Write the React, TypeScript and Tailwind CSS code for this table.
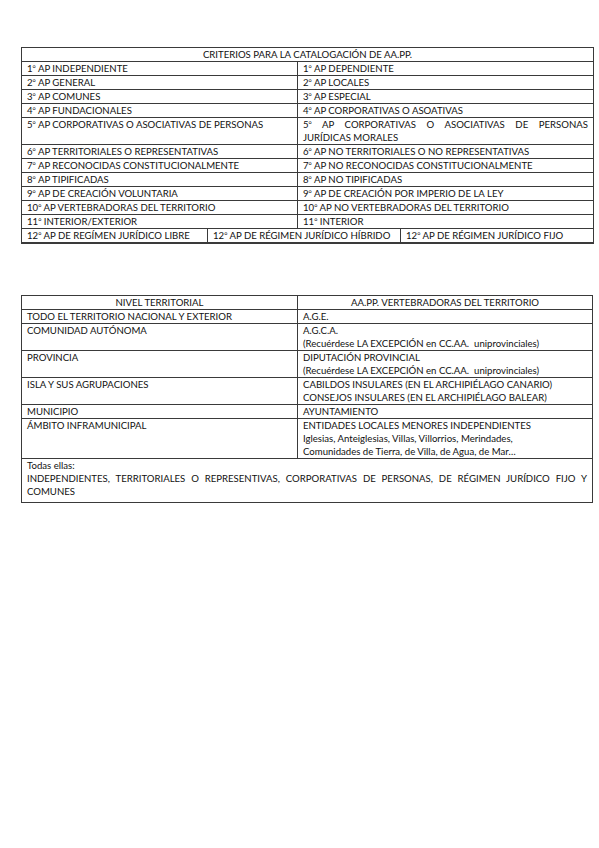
import React from "react";

const cell = "border border-[#3a3a3a] px-[5px] align-top";

const pairs: [string, string][] = [
  ["1º AP INDEPENDIENTE", "1º AP DEPENDIENTE"],
  ["2º AP GENERAL", "2º AP LOCALES"],
  ["3º AP COMUNES", "3º AP ESPECIAL"],
  ["4º AP FUNDACIONALES", "4º AP CORPORATIVAS O ASOATIVAS"],
];

const pairs2: [string, string][] = [
  ["6º AP TERRITORIALES O REPRESENTATIVAS", "6º AP NO TERRITORIALES O NO REPRESENTATIVAS"],
  ["7º AP RECONOCIDAS CONSTITUCIONALMENTE", "7º AP NO RECONOCIDAS CONSTITUCIONALMENTE"],
  ["8º AP TIPIFICADAS", "8º AP NO TIPIFICADAS"],
  ["9º AP DE CREACIÓN VOLUNTARIA", "9º AP DE CREACIÓN POR IMPERIO DE LA LEY"],
  ["10º AP VERTEBRADORAS DEL TERRITORIO", "10º AP NO VERTEBRADORAS DEL TERRITORIO"],
  ["11º INTERIOR/EXTERIOR", "11º INTERIOR"],
];

// Lato draws º like a degree sign, so the ordinal gets a font with an underlined one
function Ord({ text }: { text: string }) {
  const [num, ...rest] = text.split("º");
  return (
    <>
      {num}
      <span className="[font-family:'Open_Sans',sans-serif] text-[8.5px]">º</span>
      {rest.join("º")}
    </>
  );
}

function Justified({ children }: { children: React.ReactNode }) {
  // first line of a justified paragraph: spread to the full cell width
  return <div className="text-justify [text-align-last:justify]">{children}</div>;
}

export default function App() {
  return (
    <div className="min-h-[848px] w-[599px] bg-white pt-[47px] text-[9.6px] leading-[13px] text-[#111] [font-family:Lato,'Liberation_Sans',sans-serif]">
      <table className="ml-[21px] w-[572px] table-fixed border-collapse">
        <colgroup>
          <col className="w-[186px]" />
          <col className="w-[90px]" />
          <col className="w-[103px]" />
          <col className="w-[193px]" />
        </colgroup>
        <tbody>
          <tr>
            <td colSpan={4} className={`${cell} text-center`}>
              CRITERIOS PARA LA CATALOGACIÓN DE AA.PP.
            </td>
          </tr>
          {pairs.map(([a, b]) => (
            <tr key={a}>
              <td colSpan={2} className={cell}><Ord text={a} /></td>
              <td colSpan={2} className={cell}><Ord text={b} /></td>
            </tr>
          ))}
          <tr>
            <td colSpan={2} className={cell}>
              <Ord text="5º AP CORPORATIVAS O ASOCIATIVAS DE PERSONAS" />
            </td>
            <td colSpan={2} className={cell}>
              <Justified>
                <Ord text="5º AP CORPORATIVAS O ASOCIATIVAS DE PERSONAS" />
              </Justified>
              <div>JURÍDICAS MORALES</div>
            </td>
          </tr>
          {pairs2.map(([a, b]) => (
            <tr key={a}>
              <td colSpan={2} className={cell}><Ord text={a} /></td>
              <td colSpan={2} className={cell}><Ord text={b} /></td>
            </tr>
          ))}
          <tr>
            <td className={`${cell} border-b-2`}>
              <Ord text="12º AP DE REGÍMEN JURÍDICO LIBRE" />
            </td>
            <td colSpan={2} className={`${cell} border-b-2`}>
              <Ord text="12º AP DE RÉGIMEN JURÍDICO HÍBRIDO" />
            </td>
            <td className={`${cell} border-b-2`}>
              <Ord text="12º AP DE RÉGIMEN JURÍDICO FIJO" />
            </td>
          </tr>
        </tbody>
      </table>

      <table className="ml-[21px] mt-[51px] w-[571px] table-fixed border-collapse">
        <colgroup>
          <col className="w-[276px]" />
          <col className="w-[295px]" />
        </colgroup>
        <tbody>
          <tr>
            <td className={`${cell} text-center`}>NIVEL TERRITORIAL</td>
            <td className={`${cell} text-center`}>AA.PP. VERTEBRADORAS DEL TERRITORIO</td>
          </tr>
          <tr>
            <td className={cell}>TODO EL TERRITORIO NACIONAL Y EXTERIOR</td>
            <td className={cell}>A.G.E.</td>
          </tr>
          <tr>
            <td className={cell}>COMUNIDAD AUTÓNOMA</td>
            <td className={`${cell} whitespace-pre`}>
              <div>A.G.C.A.</div>
              <div>(Recuérdese LA EXCEPCIÓN en CC.AA.  uniprovinciales)</div>
            </td>
          </tr>
          <tr>
            <td className={cell}>PROVINCIA</td>
            <td className={`${cell} whitespace-pre`}>
              <div>DIPUTACIÓN PROVINCIAL</div>
              <div>(Recuérdese LA EXCEPCIÓN en CC.AA.  uniprovinciales)</div>
            </td>
          </tr>
          <tr>
            <td className={cell}>ISLA Y SUS AGRUPACIONES</td>
            <td className={cell}>
              <div>CABILDOS INSULARES (EN EL ARCHIPIÉLAGO CANARIO)</div>
              <div>CONSEJOS INSULARES (EN EL ARCHIPIÉLAGO BALEAR)</div>
            </td>
          </tr>
          <tr>
            <td className={cell}>MUNICIPIO</td>
            <td className={cell}>AYUNTAMIENTO</td>
          </tr>
          <tr>
            <td className={cell}>ÁMBITO INFRAMUNICIPAL</td>
            <td className={cell}>
              <div>ENTIDADES LOCALES MENORES INDEPENDIENTES</div>
              <div>Iglesias, Anteiglesias, Villas, Villorrios, Merindades,</div>
              <div>Comunidades de Tierra, de Villa, de Agua, de Mar…</div>
            </td>
          </tr>
          <tr>
            <td colSpan={2} className={`${cell} pb-[4px]`}>
              <div>Todas ellas:</div>
              <Justified>
                INDEPENDIENTES, TERRITORIALES O REPRESENTIVAS, CORPORATIVAS DE PERSONAS, DE RÉGIMEN JURÍDICO FIJO Y
              </Justified>
              <div>COMUNES</div>
            </td>
          </tr>
        </tbody>
      </table>
    </div>
  );
}
